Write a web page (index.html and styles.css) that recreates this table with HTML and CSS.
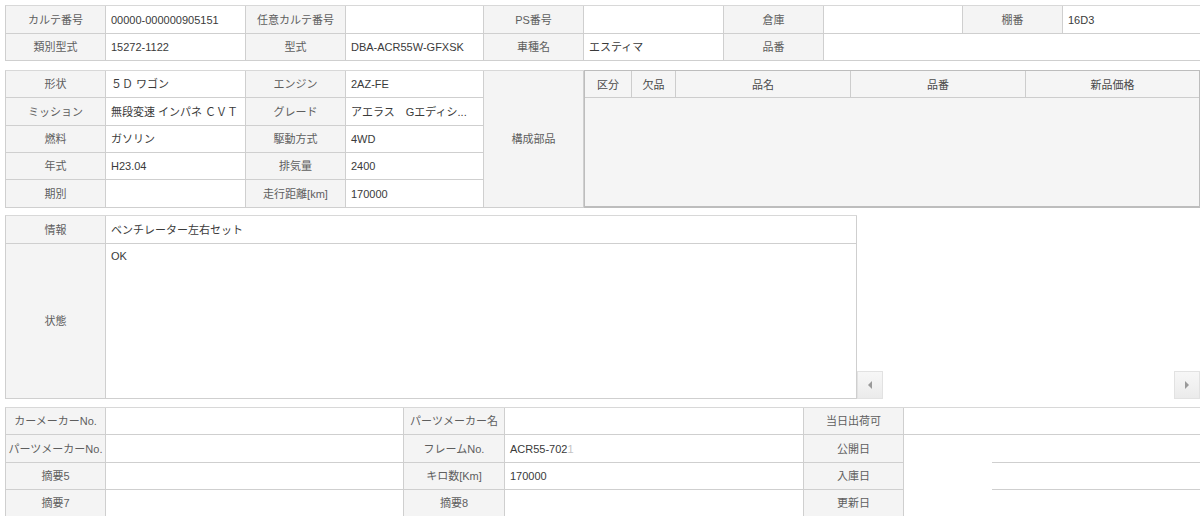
FILE: index.html
```html
<!DOCTYPE html>
<html lang="ja">
<head>
<meta charset="utf-8">
<title>カルテ</title>
<link rel="stylesheet" href="styles.css">
</head>
<body>
<div class="grid sec1">
  <div class="lb">カルテ番号</div><div>00000-000000905151</div>
  <div class="lb">任意カルテ番号</div><div></div>
  <div class="lb">PS番号</div><div></div>
  <div class="lb">倉庫</div><div></div>
  <div class="lb">棚番</div><div>16D3</div>
  <div class="lb">類別型式</div><div>15272-1122</div>
  <div class="lb">型式</div><div>DBA-ACR55W-GFXSK</div>
  <div class="lb">車種名</div><div>エスティマ</div>
  <div class="lb">品番</div><div class="span3"></div>
</div>

<div class="sec2">
  <div class="grid spec">
    <div class="lb">形状</div><div>５Ｄ ワゴン</div>
    <div class="lb">エンジン</div><div>2AZ-FE</div>
    <div class="lb parts">構成部品</div>
    <div class="lb">ミッション</div><div>無段変速 インパネ ＣＶＴ</div>
    <div class="lb">グレード</div><div>アエラス　Gエディシ...</div>
    <div class="lb">燃料</div><div>ガソリン</div>
    <div class="lb">駆動方式</div><div>4WD</div>
    <div class="lb">年式</div><div>H23.04</div>
    <div class="lb">排気量</div><div>2400</div>
    <div class="lb">期別</div><div></div>
    <div class="lb">走行距離[km]</div><div>170000</div>
  </div>
  <div class="nested">
    <div class="nhead">
      <div>区分</div><div>欠品</div><div>品名</div><div>品番</div><div>新品価格</div>
    </div>
    <div class="nbody"></div>
  </div>
</div>

<div class="sec3">
  <div class="grid info">
    <div class="lb">情報</div><div>ベンチレーター左右セット</div>
    <div class="lb">状態</div><div class="state">OK</div>
  </div>
  <div class="scroller">
    <div class="sbtn"><span class="tri left"></span></div>
    <div class="sbtn"><span class="tri right"></span></div>
  </div>
</div>

<div class="grid sec4">
  <div class="lb">カーメーカーNo.</div><div></div>
  <div class="lb">パーツメーカー名</div><div></div>
  <div class="lb">当日出荷可</div><div class="last"></div>
  <div class="lb">パーツメーカーNo.</div><div></div>
  <div class="lb">フレームNo.</div><div>ACR55-702<span class="faint">1</span></div>
  <div class="lb">公開日</div><div class="last partial"></div>
  <div class="lb">摘要5</div><div></div>
  <div class="lb">キロ数[Km]</div><div>170000</div>
  <div class="lb">入庫日</div><div class="last partial"></div>
  <div class="lb">摘要7</div><div></div>
  <div class="lb">摘要8</div><div></div>
  <div class="lb">更新日</div><div class="last none"></div>
</div>
</body>
</html>
```

FILE: styles.css
```css
* {
  box-sizing: border-box;
  margin: 0;
  padding: 0;
}

html,
body {
  width: 1200px;
  height: 516px;
  overflow: hidden;
  background: #fff;
}

body {
  padding: 5px 0 0 5px;
  font-family: "Liberation Sans", "Noto Sans CJK JP", sans-serif;
  font-size: 11px;
  color: #3a3a3a;
}

.grid {
  display: grid;
  border-top: 1px solid #d8d8d8;
  border-left: 1px solid #cfcfcf;
}

.grid > div {
  display: flex;
  align-items: center;
  padding: 0 5px;
  border-right: 1px solid #cfcfcf;
  border-bottom: 1px solid #cfcfcf;
  white-space: nowrap;
  overflow: hidden;
  line-height: 14px;
}

.grid > .lb {
  justify-content: center;
  padding: 0;
  background: #f4f4f4;
  color: #5e5e5e;
}

/* section 1 */
.sec1 {
  width: 1196px;
  grid-template-columns: 100px 140px 100px 138px 100px 140px 100px 139px 100px 138px;
  grid-template-rows: 28px 27px;
}

.sec1 .span3 {
  grid-column: span 3;
}

/* section 2 */
.sec2 {
  display: flex;
  margin-top: 9px;
  height: 138px;
}

.spec {
  width: 579px;
  grid-template-columns: 100px 140px 100px 138px 100px;
  grid-template-rows: 27px 28px 27px 27px 28px;
}

.spec .parts {
  grid-column: 5;
  grid-row: 1 / span 5;
}

.nested {
  width: 616px;
  display: flex;
  flex-direction: column;
  border: 1px solid #bdbdbd;
  border-bottom-width: 2px;
  background: #f5f5f5;
}

.nhead {
  display: grid;
  grid-template-columns: 47px 44px 175px 175px 1fr;
  height: 27px;
  border-bottom: 1px solid #cdcdcd;
}

.nhead > div {
  display: flex;
  align-items: center;
  justify-content: center;
  border-right: 1px solid #cdcdcd;
  color: #4a4a4a;
}

.nhead > div:last-child {
  border-right: none;
}

.nbody {
  flex: 1;
}

/* section 3 */
.sec3 {
  display: flex;
  margin-top: 7px;
}

.info {
  width: 852px;
  grid-template-columns: 100px 751px;
  grid-template-rows: 28px 155px;
}

.info .state {
  align-items: flex-start;
  padding-top: 5px;
}

.scroller {
  flex: 1;
  display: flex;
  justify-content: space-between;
  align-items: flex-end;
}

.sbtn {
  width: 26px;
  height: 28px;
  display: flex;
  align-items: center;
  justify-content: center;
  background: linear-gradient(#f7f7f7, #ebebeb);
  border: 1px solid #e2e2e2;
}

.tri {
  width: 0;
  height: 0;
  border-top: 4px solid transparent;
  border-bottom: 4px solid transparent;
}

.tri.left {
  border-right: 4px solid #9a9a9a;
}

.tri.right {
  border-left: 4px solid #9a9a9a;
}

/* section 4 */
.sec4 {
  width: 1196px;
  margin-top: 8px;
  grid-template-columns: 100px 298px 101px 299px 100px 297px;
  grid-template-rows: 27px 28px 27px 27px;
}

.sec4 .last {
  border-right: none;
}

.sec4 .partial {
  border-bottom: none;
  background: linear-gradient(#cfcfcf, #cfcfcf) no-repeat right bottom / calc(100% - 88px) 1px;
}

.sec4 .none {
  border-bottom: none;
}

.faint {
  color: #c4c4c4;
}
```
